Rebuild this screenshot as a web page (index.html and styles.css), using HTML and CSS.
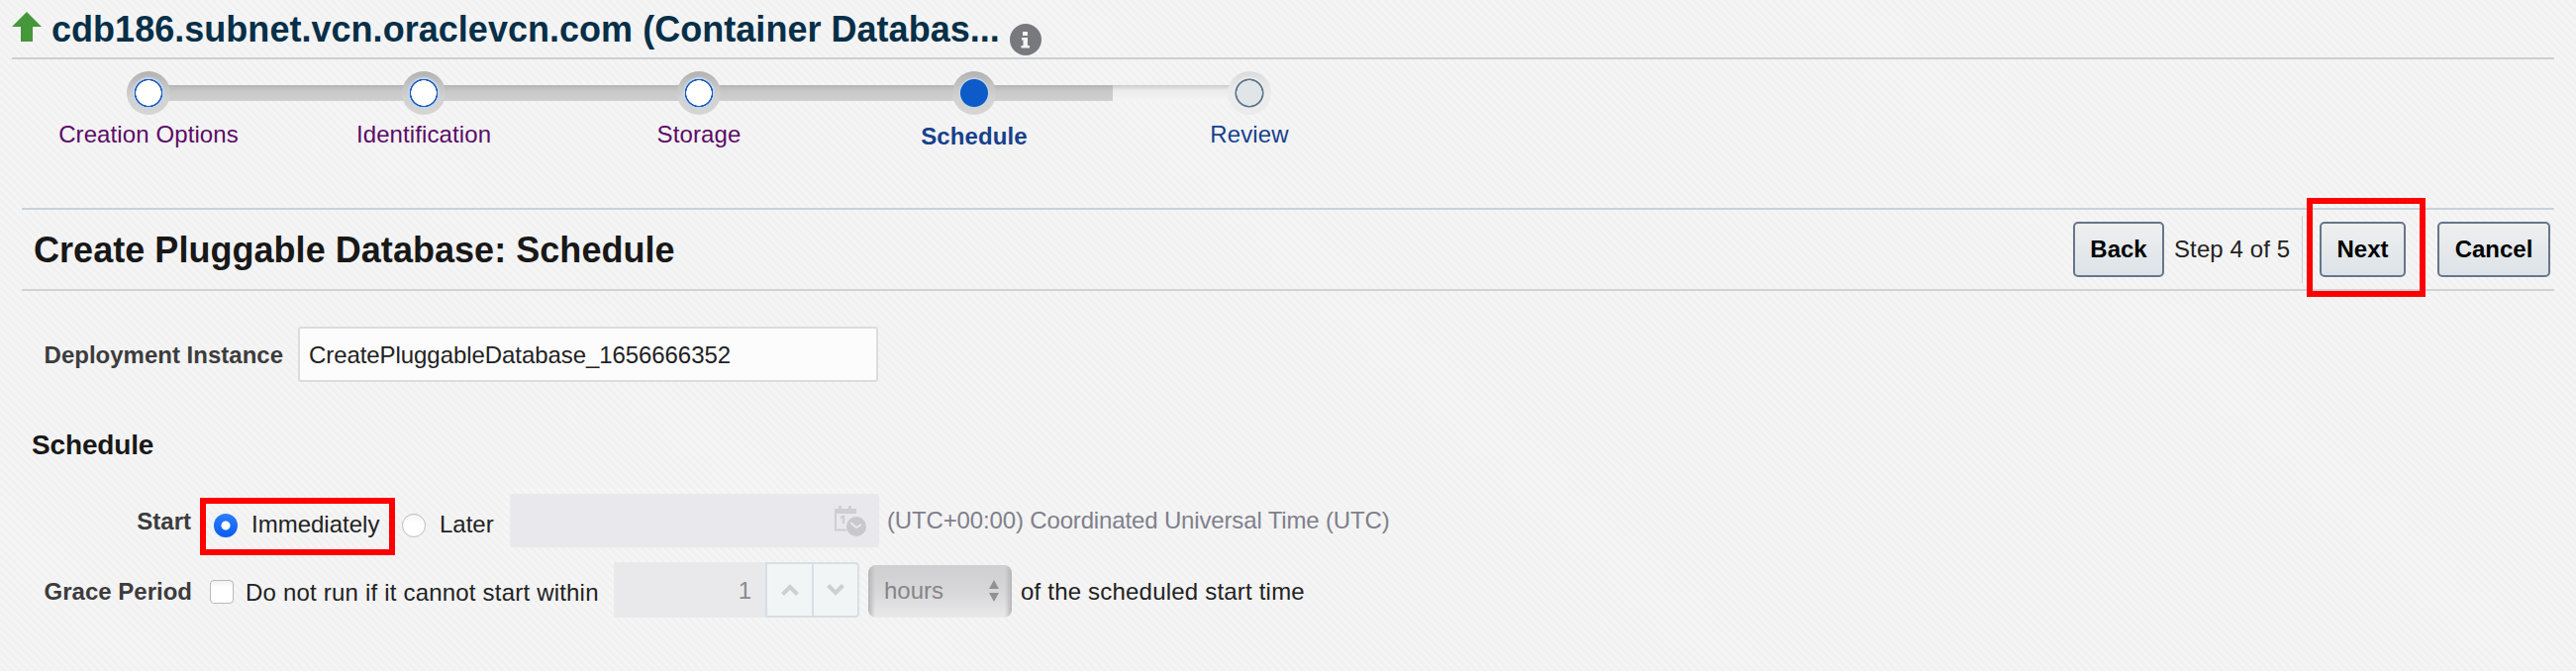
FILE: index.html
```html
<!DOCTYPE html>
<html lang="en">
<head>
<meta charset="utf-8">
<title>Create Pluggable Database: Schedule</title>
<link rel="stylesheet" href="styles.css">
</head>
<body>
<header class="target">
  <svg class="status" width="30" height="30" viewBox="0 0 30 30"><path d="M15 0 30 15H21V30H9V15H0Z" fill="#46963a"/></svg>
  <h1 class="target-name"><span>cdb186.subnet.vcn.oraclevcn.com (Container Databas...</span></h1>
  <svg class="info" width="32" height="32" viewBox="0 0 32 32"><circle cx="16" cy="16" r="16" fill="#77797d"/><path d="M13 8h5v4h-5zM12 14h6v8h2v2.500h-8.500V22h2v-5.500h-1.500z" fill="#f4f4f4"/></svg>
</header>

<nav class="train">
  <div class="stop done"><i class="bar"></i><i class="dot"></i><span>Creation Options</span></div>
  <div class="stop done"><i class="bar"></i><i class="dot"></i><span>Identification</span></div>
  <div class="stop done"><i class="bar"></i><i class="dot"></i><span>Storage</span></div>
  <div class="stop current"><i class="bar"></i><i class="dot"></i><span>Schedule</span></div>
  <div class="stop next"><i class="dot"></i><span>Review</span></div>
</nav>

<section class="page-bar">
  <h2 class="page-title"><span>Create Pluggable Database: Schedule</span></h2>
  <div class="actions">
    <button class="btn back">Back</button>
    <span class="step">Step 4 of 5</span>
    <i class="divider"></i>
    <span class="mark-wrap"><button class="btn forward">Next</button><i class="mark mark-next"></i></span>
    <button class="btn cancel">Cancel</button>
  </div>
</section>

<main>
  <div class="row deployment">
    <label class="label">Deployment Instance</label>
    <div class="field"><span>CreatePluggableDatabase_1656666352</span></div>
  </div>

  <h3 class="section-title"><span>Schedule</span></h3>

  <div class="row start">
    <label class="label">Start</label>
    <div class="choice immediately"><i class="radio on"></i><span>Immediately</span><i class="mark mark-now"></i></div>
    <div class="choice later"><i class="radio"></i><span>Later</span></div>
    <div class="date">
      <svg width="34" height="34" viewBox="0 0 34 34" fill="none"><path d="M2 5V25.500H13" stroke="#cfcfd2" stroke-width="2"/><path d="M1 4h4V1h3v3h7V1h3v3h5v5H1z" fill="#cfcfd2"/><path d="M7 13l3-1v7" stroke="#cfcfd2" stroke-width="2.500"/><circle cx="23" cy="22" r="10" fill="#c9c9cc"/><path d="M17 18l6 5 5-3" stroke="#e9e9ec" stroke-width="2"/></svg>
    </div>
    <span class="zone">(UTC+00:00) Coordinated Universal Time (UTC)</span>
  </div>

  <div class="row grace">
    <label class="label">Grace Period</label>
    <i class="check"></i>
    <span class="grace-text">Do not run if it cannot start within</span>
    <div class="number">1</div>
    <div class="spin">
      <svg width="18" height="12" viewBox="0 0 18 12"><path d="M1.500 10.500 9 3l7.500 7.500" fill="none" stroke="#cdd0d2" stroke-width="4"/></svg>
    </div>
    <div class="spin down">
      <svg width="18" height="12" viewBox="0 0 18 12"><path d="M1.500 1.500 9 9l7.500-7.500" fill="none" stroke="#cdd0d2" stroke-width="4"/></svg>
    </div>
    <div class="select"><span>hours</span>
      <svg width="10" height="22" viewBox="0 0 10 22"><path d="M5 0 10 9H0zM5 22 0 13h10z" fill="#919193"/></svg>
    </div>
    <span class="tail">of the scheduled start time</span>
  </div>
</main>
</body>
</html>
```
FILE: styles.css
```css
* { box-sizing: border-box; }

body {
  margin: 0;
  min-height: 678px;
  background: linear-gradient(45deg, #f5f5f5 25%, #f1f1f1 25% 50%, #f5f5f5 50% 75%, #f1f1f1 75%) 0 0 / 8px 8px;
  color: #222;
  font: 24px/30px "Liberation Sans", Arial, sans-serif;
  white-space: nowrap;
}

h1, h2, h3 { margin: 0; }
i { display: block; flex: none; }
svg { display: block; flex: none; }

.target {
  display: flex;
  align-items: flex-start;
  height: 60px;
  margin: 0 22px 0 12px;
  border-bottom: 2px solid #cdcfd2;
}
.status { margin-top: 12px; }
.target-name {
  width: 967px;
  margin: 10px 0 0 10px;
  color: #062f48;
  font-size: 36px;
  line-height: 40px;
  letter-spacing: 0.03px;
}
.info { margin: 24px 0 0 1px; }

.train {
  display: grid;
  grid-template-columns: repeat(5, 278px);
  height: 150px;
  padding: 12px 0 0 11px;
}
.stop {
  position: relative;
  display: flex;
  flex-direction: column;
  align-items: center;
  color: #5b0a66;
  letter-spacing: 0.1px;
}
.stop .bar {
  position: absolute;
  top: 14px;
  left: 139px;
  width: 278px;
  height: 16px;
  background: linear-gradient(#b5b5b5, #cacaca 45%, #cfcfcf);
}
.stop .dot {
  position: relative;
  z-index: 1;
  width: 44px;
  height: 44px;
  margin-bottom: 5px;
  border-radius: 50%;
  background: radial-gradient(circle, #fff 0 12.500px, #1d5cb8 13px 14px, #c3d6ec 14.500px 15px, transparent 17px), linear-gradient(#b2b2b2, #d2d2d2 60%, #d5d5d3);
}
.stop.current { color: #17408c; font-weight: bold; }
.current .dot {
  margin-bottom: 7px;
  background: radial-gradient(circle, #0c5bc9 0 13.500px, #c9d6e4 14.500px, transparent 16px), linear-gradient(#b2b2b2, #d2d2d2 60%, #d5d5d3);
}
.current .bar {
  background: linear-gradient(#b5b5b5, #cacaca 45%, #cfcfcf) 0 0 / 140px 16px no-repeat, linear-gradient(#ccc, #ececec 35%, #f4f4f4);
}
.stop.next { color: #17408c; }
.next .dot {
  background: radial-gradient(circle, #e0e5e8 0 12.500px, #5f7486 13px 14px, #eaeef2 15px, transparent 17px), linear-gradient(#dcdcdc, #ececec 50%, #ebebeb);
}

.page-bar {
  display: flex;
  align-items: center;
  justify-content: space-between;
  height: 84px;
  margin: 0 22px;
  padding: 0 4px 0 12px;
  border-top: 2px solid #c9d2da;
  border-bottom: 2px solid #cfd2d6;
}
.page-title { padding-top: 2px; color: #181818; font-size: 36px; line-height: 40px; letter-spacing: 0.04px; }
.actions { display: flex; align-items: center; }
.btn {
  height: 56px;
  padding: 0;
  border: 2px solid #66758a;
  border-radius: 5px;
  background: linear-gradient(#efefef, #dce3e8);
  color: #000;
  font: bold 24px/50px "Liberation Sans", Arial, sans-serif;
}
.back { width: 92px; }
.step { width: 139px; padding-left: 10px; letter-spacing: 0.1px; }
.divider { width: 1px; height: 68px; background: #c9d2de; }
.mark-wrap { position: relative; margin: 0 32px 0 17px; }
.forward { width: 87px; }
.cancel { width: 114px; }
.mark { position: absolute; border: 6px solid #fe0000; }
.mark-next { top: -24px; left: -13px; width: 120px; height: 100px; }

.row { display: flex; align-items: center; }
.label { color: #3c3c3c; font-weight: bold; text-align: right; }

.deployment { height: 56px; margin-top: 36px; }
.deployment .label { width: 286px; padding-top: 2px; }
.field {
  width: 586px;
  height: 56px;
  margin-left: 15px;
  padding: 12px 9px 10px;
  border: 2px solid #dcdcdc;
  border-radius: 3px;
  background: #fcfcfd;
  letter-spacing: -0.07px;
}

.section-title { margin: 48px 0 0 32px; color: #181818; font-size: 28px; line-height: 32px; letter-spacing: -0.15px; }

.start { height: 53px; margin-top: 33px; }
.start .label { width: 193px; margin-right: 1px; padding-top: 2px; }
.choice { position: relative; display: flex; align-items: center; gap: 14px; padding-top: 10px; }
.choice span { margin-top: -2px; }
.immediately { width: 190px; margin-left: 22px; }
.radio {
  width: 24px;
  height: 24px;
  border: 1px solid #bcbcbc;
  border-radius: 50%;
  background: linear-gradient(#f4f4f4, #fff 40%);
}
.radio.on { border: 0; background: radial-gradient(circle, #fff 4px, transparent 5px), linear-gradient(#2a7dfb, #0a5cf2); }
.mark-now { top: -4px; left: -14px; width: 197px; height: 58px; }
.later { width: 109px; }
.date { width: 373px; height: 54px; padding: 11px 0 0 327px; border-radius: 3px; background: #e9e9ed; }
.zone { margin-left: 8px; color: #7f808c; letter-spacing: -0.15px; }

.grace { height: 56px; margin-top: 16px; }
.grace .label { width: 194px; padding-top: 4px; }
.check {
  width: 24px;
  height: 24px;
  margin: 4px 12px 0 18px;
  border: 1px solid #b9b9b9;
  border-radius: 4px;
  background: linear-gradient(#f1f1f1, #fff 30%);
}
.grace-text { width: 372px; padding-top: 5px; letter-spacing: 0.2px; }
.number { width: 153px; height: 56px; padding: 14px 14px 0 0; background: #e9e9eb; color: #8a8a8c; text-align: right; }
.spin { display: flex; align-items: center; justify-content: center; width: 49px; height: 56px; border: 2px solid #d6dfe4; background: #f2f5f6; }
.down { width: 46px; border-left: 0; border-radius: 0 4px 4px 0; }
.select {
  display: flex;
  align-items: center;
  justify-content: space-between;
  width: 145px;
  height: 53px;
  margin: 3px 0 0 9px;
  padding: 0 13px 2px 16px;
  border-radius: 8px;
  background: linear-gradient(90deg, #b5b5b7, transparent 7px, transparent 138px, #b5b5b7), linear-gradient(#cfcfd1, #d7d7d9 50%, #e9e9ea);
  color: #858587;
}
.tail { margin-left: 9px; padding-top: 4px; letter-spacing: 0.2px; }
```
